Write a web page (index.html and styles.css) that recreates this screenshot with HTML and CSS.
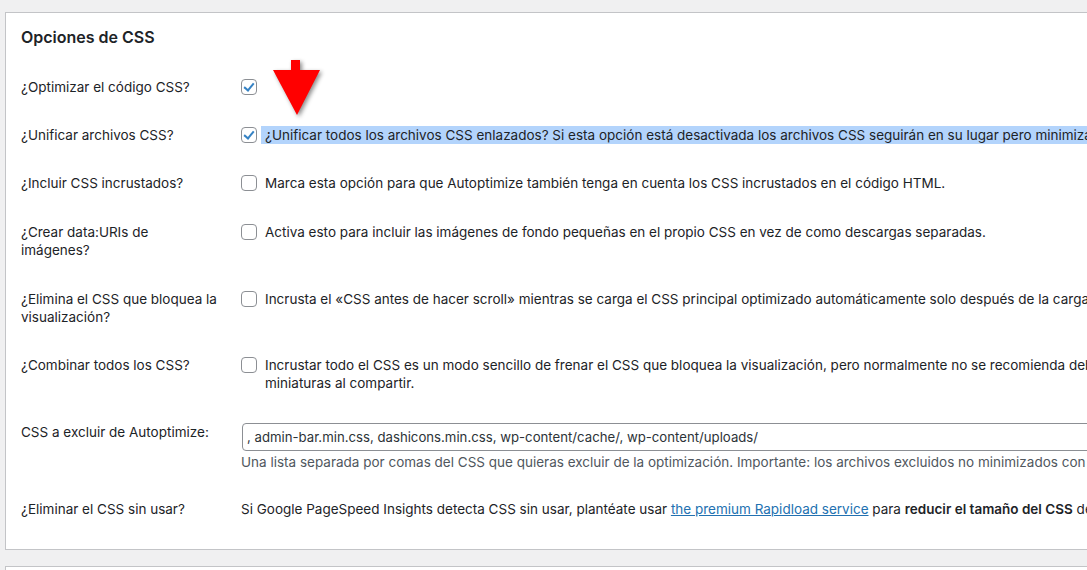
FILE: index.html
```html
<!DOCTYPE html>
<html lang="es">
<head>
    <meta charset="UTF-8">
    <meta name="viewport" content="width=device-width, initial-scale=1.0">
    <title>Autoptimize - Opciones de CSS</title>
    <link rel="stylesheet" href="styles.css">
</head>
<body>

<div class="postbox">
    <h2>Opciones de CSS</h2>
    <table class="form-table">
        <tr>
            <th>¿Optimizar el código CSS?</th>
            <td><label class="check-row"><input type="checkbox" checked></label></td>
        </tr>
        <tr>
            <th>¿Unificar archivos CSS?</th>
            <td><label class="check-row"><input type="checkbox" checked><span class="selected">¿Unificar todos los archivos CSS enlazados? Si esta opción está desactivada los archivos CSS seguirán en su lugar pero minimizados.</span></label></td>
        </tr>
        <tr>
            <th>¿Incluir CSS incrustados?</th>
            <td><label class="check-row"><input type="checkbox"><span>Marca esta opción para que Autoptimize también tenga en cuenta los CSS incrustados en el código HTML.</span></label></td>
        </tr>
        <tr class="double">
            <th>¿Crear data:URIs de<br>imágenes?</th>
            <td><label class="check-row"><input type="checkbox"><span>Activa esto para incluir las imágenes de fondo pequeñas en el propio CSS en vez de como descargas separadas.</span></label></td>
        </tr>
        <tr class="double">
            <th>¿Elimina el CSS que bloquea la<br>visualización?</th>
            <td><label class="check-row"><input type="checkbox"><span>Incrusta el «CSS antes de hacer scroll» mientras se carga el CSS principal optimizado automáticamente solo después de la carga de la página.</span></label></td>
        </tr>
        <tr>
            <th>¿Combinar todos los CSS?</th>
            <td><label class="check-row"><input type="checkbox"><span>Incrustar todo el CSS es un modo sencillo de frenar el CSS que bloquea la visualización, pero normalmente no se recomienda debido a que el tamaño del HTML aumenta.<br>miniaturas al compartir.</span></label></td>
        </tr>
        <tr class="field">
            <th>CSS a excluir de Autoptimize:</th>
            <td>
                <input type="text" class="text-input" value=", admin-bar.min.css, dashicons.min.css, wp-content/cache/, wp-content/uploads/">
                <p class="description">Una lista separada por comas del CSS que quieras excluir de la optimización. Importante: los archivos excluidos no minimizados con Autoptimize.</p>
            </td>
        </tr>
        <tr class="last">
            <th>¿Eliminar el CSS sin usar?</th>
            <td class="plain">Si Google PageSpeed Insights detecta CSS sin usar, plantéate usar <a href="#">the premium Rapidload service</a> para <strong>reducir el tamaño del CSS</strong> de tus páginas.</td>
        </tr>
    </table>
</div>

<div class="postbox next"></div>

<!-- flecha roja sobre la opción -->
<svg class="arrow" width="60" height="70" viewBox="0 0 60 70">
    <path d="M18 0 H27 V10 H47 L24 55 L0 10 H18 Z" fill="#ff0000"/>
</svg>

</body>
</html>
```

FILE: styles.css
```css
body {
    margin: 0;
    background-color: #f0f0f1;
    font-family: Inter, "Noto Sans", sans-serif;
    font-size: 13.5px;
    line-height: 18px;
    color: #1d2327;
    overflow: hidden;
    position: relative;
}

.postbox {
    margin: 12px 0 0 5px;
    width: 1600px;
    background-color: #fff;
    border: 1px solid #c3c4c7;
    padding: 0 15px 16px;
}

.postbox.next {
    margin-top: 16px;
    height: 40px;
}

.postbox h2 {
    margin: 14px 0 16px;
    font-size: 16px;
    line-height: 20px;
    font-weight: 600;
}

.form-table {
    border-collapse: collapse;
}

.form-table th {
    width: 200px;
    padding: 15px 10px 15px 0;
    text-align: left;
    vertical-align: top;
    font-weight: 400;
}

.form-table td {
    padding: 15px 10px;
    vertical-align: top;
    white-space: nowrap;
}

.form-table .double th,
.form-table .double td {
    padding-top: 16px;
}

.form-table .field th {
    padding-top: 16px;
}

.form-table .field td {
    padding-top: 16px;
}

.form-table .last th,
.form-table .last td {
    padding-top: 14px;
}

.check-row {
    display: flex;
    align-items: flex-start;
}

.check-row input {
    appearance: none;
    -webkit-appearance: none;
    width: 16px;
    height: 16px;
    margin: 1px 4px 0 0;
    border: 1px solid #8c8f94;
    border-radius: 4px;
    background-color: #fff;
    position: relative;
    flex-shrink: 0;
}

.check-row input:checked::before {
    content: "";
    position: absolute;
    left: 4px;
    top: 1px;
    width: 4px;
    height: 8px;
    border-right: 2px solid #3582c4;
    border-bottom: 2px solid #3582c4;
    transform: rotate(40deg);
}

.check-row span {
    padding-left: 4px;
}

.check-row .selected {
    background-color: #b3d4fc;
}

.text-input {
    display: block;
    width: 900px;
    height: 28px;
    box-sizing: border-box;
    margin: 0 0 0 1px;
    padding: 0 4px;
    border: 1px solid #8c8f94;
    border-radius: 4px;
    font-family: inherit;
    font-size: 13.2px;
    color: #2c3338;
}

.description {
    margin: 2px 0 0;
    color: #50575e;
}

.plain a {
    color: #2271b1;
}

.plain strong {
    font-weight: 600;
}

.arrow {
    position: absolute;
    left: 273px;
    top: 60px;
    filter: drop-shadow(2px 2px 2px rgba(0, 0, 0, 0.45));
}
```
